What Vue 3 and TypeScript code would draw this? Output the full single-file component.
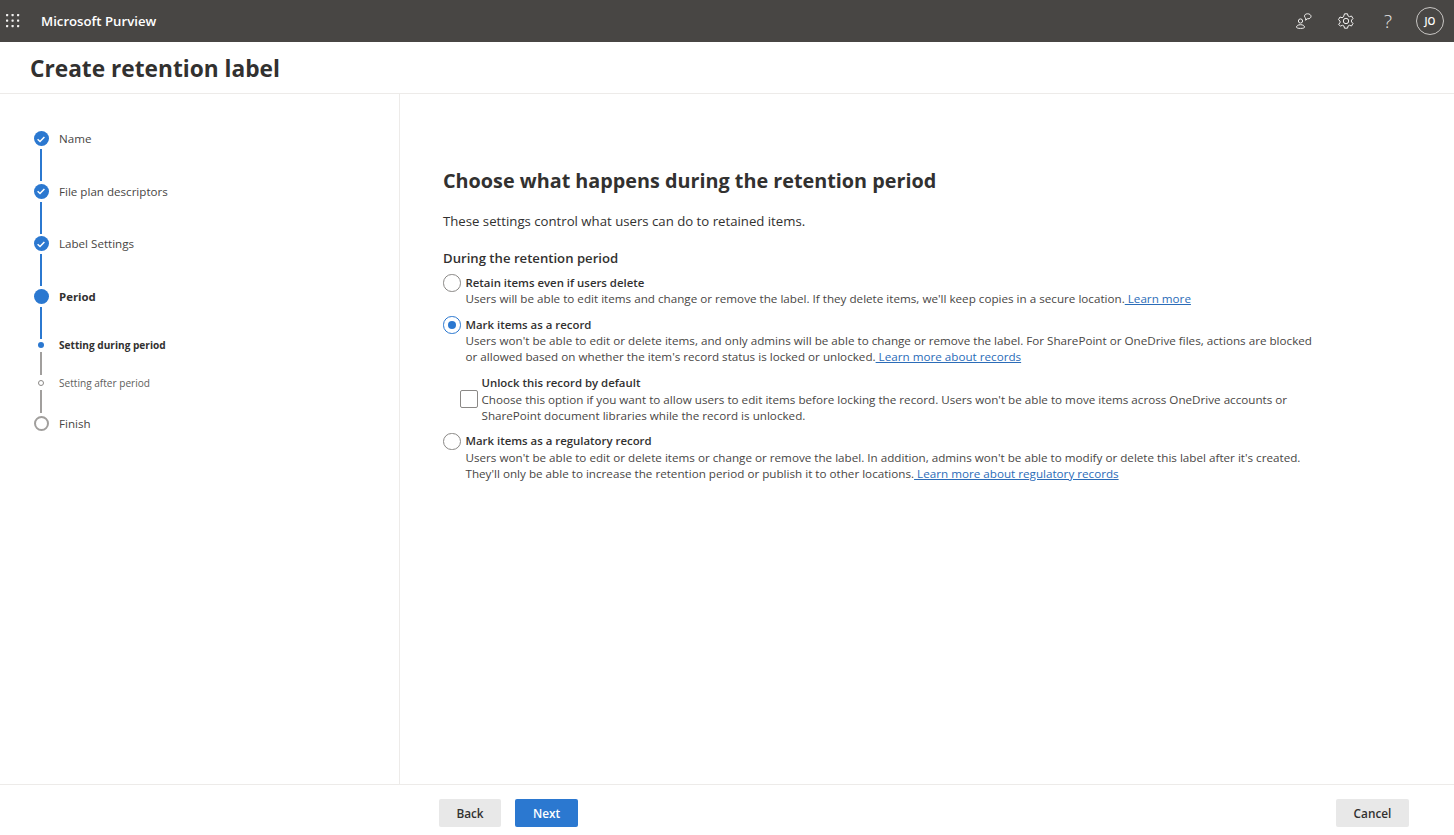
<template>
  <div class="page">
    <header class="topbar">
      <svg class="waffle" width="16" height="16" viewBox="0 0 16 16">
        <g fill="#f3f2f1">
          <template v-for="cy in [2, 7.5, 13]" :key="cy">
            <rect v-for="cx in [1, 6.5, 12]" :key="cx" :x="cx" :y="cy - 1" width="2.2" height="2.2" rx="0.6" />
          </template>
        </g>
      </svg>
      <span class="brand">Microsoft Purview</span>
      <div class="top-icons">
        <svg class="ticon" width="18" height="18" viewBox="0 0 18 18" fill="none" stroke="#f3f2f1" stroke-width="1">
          <circle cx="5.5" cy="9" r="2.1" />
          <path d="M1.500 15.200c0-1.600 1.600-2.500 4-2.500s4 .9 4 2.500c0 .8-1.600 1.200-4 1.200s-4-.4-4-1.200z" />
          <path d="M9.500 4.200c0-1.500 1.200-2.400 3-2.400s3.500.9 3.500 2.500-1.400 2.500-3.100 2.500h-.7l-1.500 1.500V6.100C10 5.800 9.500 5.100 9.500 4.200z" />
        </svg>
        <svg class="ticon" width="18" height="18" viewBox="0 0 18 18" fill="none" stroke="#f3f2f1" stroke-width="1">
          <circle cx="9" cy="9" r="2.700" />
          <path d="M7.500 1.800h3l.5 2.100 1.500.8 2-.7 1.500 2.600-1.500 1.500v1.800l1.500 1.500-1.500 2.600-2-.7-1.500.8-.5 2.100h-3l-.5-2.100-1.500-.8-2 .7L1.500 12.400 3 10.900V9.100L1.500 7.600 3 5l2 .7 1.500-.8z" stroke-linejoin="round" />
        </svg>
        <span class="help">?</span>
        <span class="avatar">JO</span>
      </div>
    </header>

    <div class="titlebar"><h1>Create retention label</h1></div>

    <div class="body">
      <nav class="steps">
        <div v-for="s in steps" :key="s.label" class="step" :class="[s.kind, s.state]">
          <div class="rail">
            <span class="dot">
              <svg v-if="s.state === 'done'" width="10" height="10" viewBox="0 0 10 10" fill="none" stroke="#fff" stroke-width="1.500">
                <path d="M1.600 5.300 4 7.500 8.400 2.900" />
              </svg>
            </span>
            <span v-if="s.line" class="line" :class="s.line"></span>
          </div>
          <span class="step-label">{{ s.label }}</span>
        </div>
      </nav>

      <main class="content">
        <h2>Choose what happens during the retention period</h2>
        <p class="intro">These settings control what users can do to retained items.</p>
        <h3>During the retention period</h3>

        <div class="option first">
          <span class="radio"></span>
          <div class="opt-text">
            <div class="opt-title">Retain items even if users delete</div>
            <div class="opt-desc">Users will be able to edit items and change or remove the label. If they delete items, we'll keep copies in a secure location.<a> Learn more</a></div>
          </div>
        </div>

        <div class="option second">
          <span class="radio on"></span>
          <div class="opt-text">
            <div class="opt-title">Mark items as a record</div>
            <div class="opt-desc">Users won't be able to edit or delete items, and only admins will be able to change or remove the label. For SharePoint or OneDrive files, actions are blocked<br />or allowed based on whether the item's record status is locked or unlocked.<a> Learn more about records</a></div>
          </div>
        </div>

        <div class="sub-option">
          <span class="check"></span>
          <div class="opt-text">
            <div class="opt-title">Unlock this record by default</div>
            <div class="opt-desc">Choose this option if you want to allow users to edit items before locking the record. Users won't be able to move items across OneDrive accounts or<br />SharePoint document libraries while the record is unlocked.</div>
          </div>
        </div>

        <div class="option third">
          <span class="radio"></span>
          <div class="opt-text">
            <div class="opt-title">Mark items as a regulatory record</div>
            <div class="opt-desc">Users won't be able to edit or delete items or change or remove the label. In addition, admins won't be able to modify or delete this label after it's created.<br />They'll only be able to increase the retention period or publish it to other locations.<a> Learn more about regulatory records</a></div>
          </div>
        </div>
      </main>
    </div>

    <footer class="footer">
      <div class="nav-btns">
        <button class="btn back">Back</button>
        <button class="btn primary">Next</button>
      </div>
      <button class="btn cancel">Cancel</button>
    </footer>
  </div>
</template>

<script setup lang="ts">
interface Step {
  label: string
  kind: 'major' | 'minor'
  state: 'done' | 'current' | 'todo'
  line?: 'blue' | 'gray'
}

const steps: Step[] = [
  { label: 'Name', kind: 'major', state: 'done', line: 'blue' },
  { label: 'File plan descriptors', kind: 'major', state: 'done', line: 'blue' },
  { label: 'Label Settings', kind: 'major', state: 'done', line: 'blue' },
  { label: 'Period', kind: 'major', state: 'current', line: 'blue' },
  { label: 'Setting during period', kind: 'minor', state: 'current', line: 'gray' },
  { label: 'Setting after period', kind: 'minor', state: 'todo', line: 'gray' },
  { label: 'Finish', kind: 'major', state: 'todo' }
]
</script>

<style>
html,
body {
  margin: 0;
  background: #fff;
}
</style>

<style scoped>
.page {
  height: 835px;
  display: flex;
  flex-direction: column;
  font-family: "Open Sans", "Noto Sans", sans-serif;
  color: #323130;
  overflow: hidden;
}

.topbar {
  height: 42px;
  flex: none;
  background: #484644;
  display: flex;
  align-items: center;
  padding-left: 5px;
  color: #fff;
}

.waffle {
  margin-right: 20px;
}

.brand {
  font-size: 13.200px;
  font-weight: 600;
}

.top-icons {
  margin-left: auto;
  display: flex;
  align-items: center;
  padding-right: 10px;
}

.ticon {
  margin-right: 24px;
}

.help {
  font-size: 19px;
  font-weight: 300;
  width: 18px;
  text-align: center;
  margin-right: 19px;
  color: #e8e6e4;
}

.avatar {
  width: 28px;
  height: 28px;
  box-sizing: border-box;
  border: 1px solid #c8c6c4;
  border-radius: 50%;
  font-size: 10px;
  font-weight: 600;
  display: flex;
  align-items: center;
  justify-content: center;
}

.titlebar {
  height: 52px;
  flex: none;
  box-sizing: border-box;
  border-bottom: 1px solid #edebe9;
  padding: 1px 0 0 30px;
  display: flex;
  align-items: center;
}

h1 {
  margin: 0;
  font-size: 22.700px;
  font-weight: 700;
}

.body {
  flex: 1;
  display: flex;
  min-height: 0;
}

.steps {
  width: 400px;
  flex: none;
  box-sizing: border-box;
  border-right: 1px solid #edebe9;
  padding: 37px 0 0 33px;
}

.step {
  display: flex;
  gap: 10px;
}

.rail {
  width: 16px;
  display: flex;
  flex-direction: column;
  align-items: center;
}

.dot {
  width: 15px;
  height: 15px;
  flex: none;
  border-radius: 50%;
  background: #2b78d0;
  display: flex;
  align-items: center;
  justify-content: center;
}

.line {
  width: 2px;
  margin-top: 3px;
}

.line.blue {
  background: #2b78d0;
}

.line.gray {
  background: #a19f9d;
}

.step.major {
  height: 52.600px;
}

.step.major .line {
  height: 32px;
}

.step.major.todo .dot {
  background: #fff;
  border: 2px solid #a19f9d;
  box-sizing: border-box;
}

.step.minor {
  height: 38px;
}

.step.minor.todo {
  height: 36px;
}

.step.minor .dot {
  width: 6px;
  height: 6px;
}

.step.minor.todo .dot {
  background: #fff;
  border: 1.500px solid #8a8886;
  box-sizing: border-box;
}

.step.minor .line {
  height: 23.500px;
  margin-top: 3.500px;
}

.step.major.current {
  height: 53.500px;
}

.step-label {
  font-size: 11.600px;
  line-height: 15px;
  color: #484644;
}

.step.current .step-label {
  font-weight: 700;
  font-size: 11.400px;
  color: #323130;
}

.step.minor .step-label {
  font-size: 10.100px;
  line-height: 7px;
  color: #605e5c;
}

.step.minor.current .step-label {
  color: #323130;
}

.content {
  flex: 1;
  padding: 73.500px 0 0 43px;
}

h2 {
  margin: 0;
  font-size: 19.800px;
  line-height: 26px;
  font-weight: 700;
}

.intro {
  margin: 18.500px 0 0;
  font-size: 13.200px;
  line-height: 18px;
}

h3 {
  margin: 19px 0 0;
  font-size: 13.150px;
  line-height: 18px;
  font-weight: 600;
}

.option {
  display: flex;
  gap: 5px;
}

.first {
  margin-top: 7px;
}

.second {
  margin-top: 9px;
}

.third {
  margin-top: 8.500px;
}

.radio {
  width: 17.500px;
  height: 17.500px;
  flex: none;
  box-sizing: border-box;
  border: 1px solid #8a8886;
  border-radius: 50%;
  background: #fff;
}

.radio.on {
  border-color: #2b78d0;
  position: relative;
}

.radio.on::after {
  content: "";
  position: absolute;
  inset: 3.500px;
  background: #2b78d0;
  border-radius: 50%;
}

.opt-title {
  font-size: 11.400px;
  line-height: 16.500px;
  font-weight: 600;
  padding-top: 0.500px;
}

.opt-desc {
  font-size: 11.660px;
  line-height: 16.200px;
  color: #484644;
  white-space: nowrap;
}

.opt-desc a {
  color: #2b6cb8;
  text-decoration: underline;
}

.sub-option {
  display: flex;
  align-items: center;
  gap: 3.500px;
  margin: 9px 0 0 17px;
}

.check {
  width: 18px;
  height: 18px;
  box-sizing: border-box;
  border: 1px solid #8a8886;
  border-radius: 2px;
  flex: none;
}

.footer {
  height: 51px;
  flex: none;
  box-sizing: border-box;
  border-top: 1px solid #edebe9;
  display: flex;
  align-items: flex-start;
  padding: 14px 45px 0 439px;
}

.nav-btns {
  display: flex;
  gap: 14px;
}

.btn {
  height: 28px;
  width: 63px;
  border: none;
  border-radius: 2px;
  background: #e8e8e8;
  color: #323130;
  font-family: inherit;
  font-size: 11.800px;
  font-weight: 600;
  padding: 0;
}

.btn.back {
  width: 62px;
}

.btn.primary {
  background: #2b78d0;
  color: #fff;
}

.btn.cancel {
  margin-left: auto;
  width: 73px;
}
</style>
